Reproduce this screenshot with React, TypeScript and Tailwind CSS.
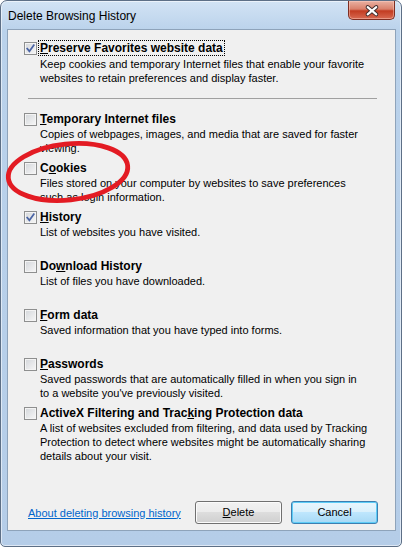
import React from "react";

type Item = {
  id: string;
  before: string;
  key: string;
  after: string;
  desc: string[];
  checked?: boolean;
};

const items: Item[] = [
  {
    id: "temp",
    before: "",
    key: "T",
    after: "emporary Internet files",
    desc: ["Copies of webpages, images, and media that are saved for faster", "viewing."],
  },
  {
    id: "cookies",
    before: "C",
    key: "o",
    after: "okies",
    desc: ["Files stored on your computer by websites to save preferences", "such as login information."],
  },
  {
    id: "history",
    before: "",
    key: "H",
    after: "istory",
    desc: ["List of websites you have visited."],
    checked: true,
  },
  {
    id: "downloads",
    before: "Do",
    key: "w",
    after: "nload History",
    desc: ["List of files you have downloaded."],
  },
  {
    id: "forms",
    before: "",
    key: "F",
    after: "orm data",
    desc: ["Saved information that you have typed into forms."],
  },
  {
    id: "passwords",
    before: "",
    key: "P",
    after: "asswords",
    desc: ["Saved passwords that are automatically filled in when you sign in", "to a website you've previously visited."],
  },
  {
    id: "activex",
    before: "ActiveX Filtering and Trac",
    key: "k",
    after: "ing Protection data",
    desc: [
      "A list of websites excluded from filtering, and data used by Tracking",
      "Protection to detect where websites might be automatically sharing",
      "details about your visit.",
    ],
  },
];

function Checkbox({ checked }: { checked?: boolean }) {
  return (
    <div className="relative w-[13px] h-[13px] shrink-0 border border-[#8e8f8f] bg-[linear-gradient(135deg,#d3d6da,#f7f7f7)] shadow-[inset_0_0_0_1px_#f4f4f4]">
      {checked && (
        <svg viewBox="0 0 13 13" className="absolute -left-px -top-px w-[13px] h-[13px]">
          <path d="M3.2 6.6 L5.4 9.3 L9.8 3.2" fill="none" stroke="#4a64a4" strokeWidth="1.7" strokeLinecap="square" />
        </svg>
      )}
    </div>
  );
}

function Option({ item }: { item: Item }) {
  return (
    <div className="h-[44px]">
      <div className="flex items-center h-[16px]">
        <Checkbox checked={item.checked} />
        <span className="ml-[1px] px-px border border-transparent font-bold text-[12px] leading-[14px] text-black">
          {item.before}
          <span className="underline">{item.key}</span>
          {item.after}
        </span>
      </div>
      <div className="ml-[16px] text-[11px] leading-[14px] text-black">
        {item.desc.map((line) => (
          <div key={line}>{line}</div>
        ))}
      </div>
    </div>
  );
}

export default function App() {
  return (
    <div className="relative w-[402px] h-[547px] overflow-hidden font-['Liberation_Sans',Arial,sans-serif] bg-white">
      <div className="flex flex-col w-full h-full border border-[#5d6f86] rounded-t-[7px] rounded-b-[5px] bg-[linear-gradient(to_bottom,#d2e3f4,#bad2eb_30px,#b5cde8)] shadow-[inset_0_0_0_1px_rgba(255,255,255,0.55)]">
        <div className="flex justify-between h-[28px]">
          <div className="pl-[7px] pt-[6px] text-[12px] leading-[18px] text-black">Delete Browsing History</div>
          <div className="mr-[6px] w-[47px] h-[19px] rounded-b-[5px] border border-t-0 border-[#7e2e22] bg-[linear-gradient(to_bottom,#e9b1a2_0%,#d9806b_45%,#c23c22_55%,#d86a52_100%)] shadow-[inset_0_0_0_1px_rgba(255,210,200,0.45)]">
            <svg viewBox="0 0 47 19" className="w-[45px] h-[19px]">
              <path d="M19.5 6 L28.5 13.5 M28.5 6 L19.5 13.5" stroke="#3b2b2b" strokeWidth="4.2" strokeLinecap="round" />
              <path d="M19.5 6 L28.5 13.5 M28.5 6 L19.5 13.5" stroke="#ffffff" strokeWidth="2.2" strokeLinecap="round" />
            </svg>
          </div>
        </div>

        <div className="relative ml-[6px] w-[389px] h-[502px] flex flex-col border border-[#8ea3ba] bg-[#f0f0f0] pl-[16px] pt-[10px]">
          <div className="h-[45px]">
            <div className="flex items-center h-[16px]">
              <Checkbox checked />
              <span className="ml-[1px] px-px border border-dotted border-black font-bold text-[12px] leading-[14px] text-black">
                <span className="underline">P</span>reserve Favorites website data
              </span>
            </div>
            <div className="ml-[16px] mt-[1px] text-[11px] leading-[14px] text-black">
              <div>Keep cookies and temporary Internet files that enable your favorite</div>
              <div>websites to retain preferences and display faster.</div>
            </div>
          </div>

          <div className="mt-[13px] ml-[4px] w-[349px] h-px bg-[#a0a0a0]" />

          <div className="mt-[12px] flex flex-col gap-[5px]">
            {items.map((item) => (
              <Option key={item.id} item={item} />
            ))}
          </div>

          <div className="mt-auto pb-[6px] pl-[4px] pr-[17px] flex items-center justify-between">
            <a className="text-[11px] leading-[14px] text-[#0066cc] underline cursor-pointer">About deleting browsing history</a>
            <div className="flex gap-[9px]">
              <button className="w-[87px] h-[23px] rounded-[3px] border border-[#707070] bg-[linear-gradient(to_bottom,#f2f2f2_0%,#ebebeb_50%,#dddddd_50%,#cfcfcf_100%)] shadow-[inset_0_0_0_1px_#fbfbfb] text-[11px] text-black">
                <span className="underline">D</span>elete
              </button>
              <button className="w-[87px] h-[23px] rounded-[3px] border border-[#3c7fb1] bg-[linear-gradient(to_bottom,#eaf6fd_0%,#d9f0fc_50%,#bee6fd_50%,#a7d9f5_100%)] shadow-[inset_0_0_0_1px_#5ecdf7] text-[11px] text-black">
                Cancel
              </button>
            </div>
          </div>
        </div>
      </div>

      <svg className="absolute left-0 top-[136px] w-[140px] h-[72px] pointer-events-none" viewBox="0 0 140 72">
        <ellipse cx="68" cy="36" rx="60" ry="28" transform="rotate(-6 68 36)" fill="none" stroke="#e31b23" strokeWidth="4.8" />
      </svg>
    </div>
  );
}
